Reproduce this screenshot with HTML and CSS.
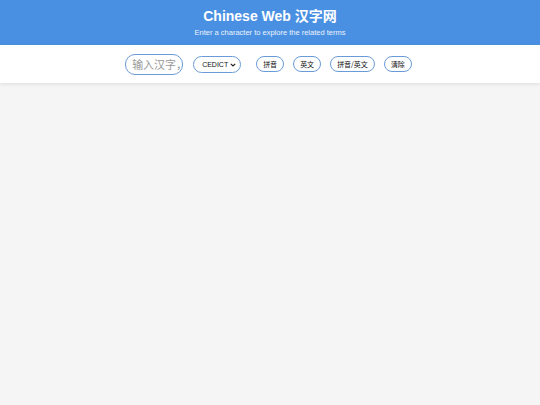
FILE: index.html
```html
<!DOCTYPE html>
<html lang="zh">
<head>
<meta charset="utf-8">
<title>Chinese Web 汉字网</title>
<link rel="stylesheet" href="styles.css">
</head>
<body>
<header class="site-header">
  <h1 class="title">Chinese Web 汉字网</h1>
  <p class="subtitle">Enter a character to explore the related terms</p>
</header>
<div class="controls">
  <input class="char-input" type="text" placeholder="输入汉字，拼音或英文">
  <span class="select-wrap">
    <select class="dict-select">
      <option>CEDICT</option>
    </select>
    <svg class="chevron" width="6" height="4" viewBox="0 0 6 4"><path d="M0.8 0.8 L3 3 L5.2 0.8" fill="none" stroke="#222" stroke-width="1.2"/></svg>
  </span>
  <button class="btn">拼音</button>
  <button class="btn">英文</button>
  <button class="btn">拼音/英文</button>
  <button class="btn">清除</button>
</div>
<main class="content"></main>
</body>
</html>
```

FILE: styles.css
```css
html, body {
  margin: 0;
  padding: 0;
  height: 100%;
}
body {
  background: #f5f5f5;
  font-family: "Liberation Sans", Arial, "Noto Sans CJK SC", sans-serif;
}
.site-header {
  background: #4a90e2;
  color: #fff;
  text-align: center;
  height: 45px;
  box-sizing: border-box;
  padding-top: 8px;
}
.title {
  margin: 0;
  font-size: 14px;
  font-weight: bold;
  line-height: 17px;
}
.subtitle {
  margin: 3px 0 0;
  font-size: 7.5px;
  line-height: 10px;
  color: #eaf2fc;
}
.controls {
  background: #fff;
  height: 38px;
  display: flex;
  align-items: center;
  justify-content: center;
  box-shadow: 0 1px 4px rgba(0,0,0,0.1);
  position: relative;
  padding-right: 3px;
}
.char-input {
  width: 58px;
  height: 21px;
  box-sizing: border-box;
  border: 1px solid #6a9bd8;
  border-radius: 10px;
  padding: 0 1px 0 6px;
  font-size: 11px;
  font-family: "Noto Sans CJK SC", sans-serif;
  outline: none;
  margin-right: 10px;
  background: #fff;
}
.char-input::placeholder {
  color: #999;
}
.select-wrap {
  position: relative;
  display: inline-flex;
  margin-right: 15px;
}
.dict-select {
  -webkit-appearance: none;
  appearance: none;
  width: 48px;
  height: 17px;
  box-sizing: border-box;
  border: 1px solid #6a9bd8;
  border-radius: 9px;
  background: #fff;
  font-size: 7px;
  font-family: "Liberation Sans", Arial, sans-serif;
  padding: 0 10px 0 8px;
  color: #111;
  outline: none;
}
.chevron {
  position: absolute;
  right: 5px;
  top: 7px;
  pointer-events: none;
}
.btn {
  height: 16px;
  box-sizing: border-box;
  border: 1px solid #6a9bd8;
  border-radius: 8px;
  background: #fff;
  font-size: 7px;
  font-family: "Noto Sans CJK SC", sans-serif;
  padding: 0 6px;
  margin-right: 9px;
  color: #111;
  line-height: 14px;
}
.btn:last-child {
  margin-right: 0;
}
```
